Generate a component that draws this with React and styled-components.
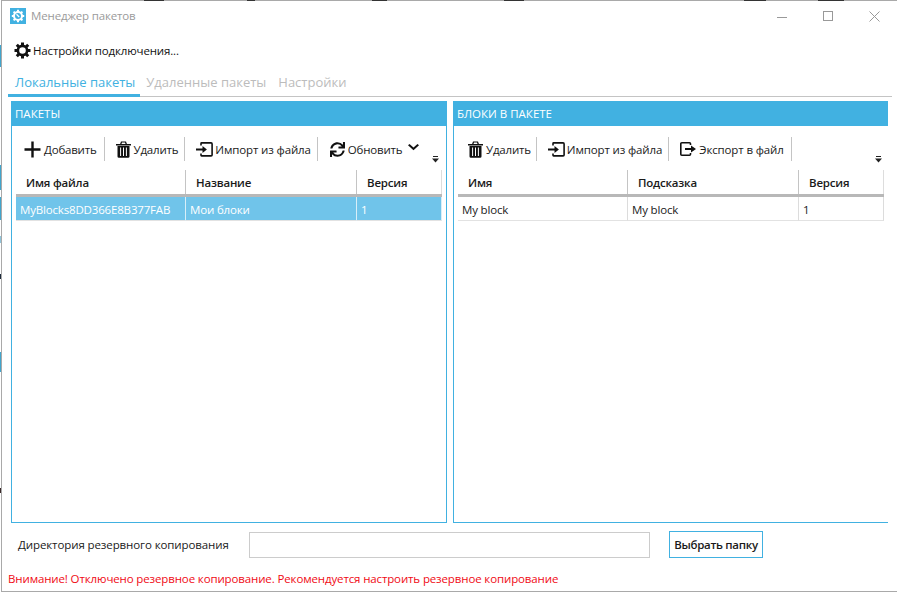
import React from 'react';
import styled, { createGlobalStyle } from 'styled-components';
import { FaSync } from 'react-icons/fa';

const Global = createGlobalStyle`
  html, body { margin: 0; padding: 0; width: 897px; height: 593px; overflow: hidden; background: #fff; }
  * { box-sizing: border-box; }
  body { font-family: "Open Sans", "Noto Sans", sans-serif; font-size: 12px; color: #1a1a1a; }
`;

const Desktop = styled.div`
  width: 897px; height: 593px; padding: 0 0 1px 1px;
  background: linear-gradient(#fff 45px, #41a5cc 45px, #41a5cc 67px, #fff 67px, #fff 165px, #41a5cc 165px, #41a5cc 190px, #fff 190px, #fff 197px, #41a5cc 197px, #41a5cc 220px, #fff 220px, #fff 236px, #8fc4da 236px, #8fc4da 243px, #fff 243px, #fff 274px, #1c2a3a 274px, #1c2a3a 279px, #fff 279px, #fff 352px, #41a5cc 352px, #41a5cc 372px, #fff 372px, #fff 488px, #3a2a2a 488px, #3a2a2a 493px, #fff 493px);
`;
const Win = styled.div`
  width: 896px; height: 592px; background: #fff; border-left: 1px solid #a9a9a9; border-bottom: 1px solid #a9a9a9;
  display: flex; flex-direction: column;
`;
const TopEdge = styled.div`
  height: 1px; flex: none;
  background: linear-gradient(90deg, #a9a9a9 142px, #333 142px, #333 162px, #a9a9a9 162px, #a9a9a9 245px, #333 245px, #333 253px, #a9a9a9 253px, #a9a9a9 370px, #333 370px, #333 385px, #a9a9a9 385px, #a9a9a9 502px, #333 502px, #333 522px, #a9a9a9 522px, #a9a9a9 742px, #333 742px, #333 764px, #a9a9a9 764px, #a9a9a9 816px, #333 816px, #333 842px, #a9a9a9 842px);
`;
const TitleBar = styled.div`
  height: 30px; flex: none; display: flex; align-items: center; padding-left: 8px; gap: 5px;
`;
const TitleText = styled.span`
  color: #9b9b9b; font-size: 11.5px; letter-spacing: -0.15px; flex: 1; padding-bottom: 1px;
`;
const WinButtons = styled.div`
  display: flex; align-items: center; color: #999;
`;
const WinBtn = styled.div`
  width: 46px; height: 30px; display: flex; align-items: center; justify-content: center;
  svg { display: block; }
`;
const ConnRow = styled.div`
  height: 40px; flex: none; display: flex; align-items: center; padding: 0 0 2px 12px; gap: 2px;
  color: #111; font-size: 11.5px; letter-spacing: -0.15px;
`;
const Tabs = styled.div`
  margin: 0 5px 0 6px; height: 26px; flex: none; display: flex; border-bottom: 1px solid #c4c4c4;
`;
const Tab = styled.div`
  font-size: 13px; height: 26px; padding: 0 ${p => (p.$active ? 5 : 6)}px 0 ${p => (p.$active ? 7 : 6)}px; line-height: 22px;
  color: ${p => (p.$active ? '#41b1e1' : '#bcbcbc')};
  border-bottom: ${p => (p.$active ? '3px solid #41b1e1' : 'none')};
  white-space: nowrap;
`;
const Panels = styled.div`
  display: flex; gap: 6px; padding: 4px 0 0 9px; height: 426px; flex: none;
`;
const Panel = styled.section`
  width: ${p => p.$w}px; height: 422px; display: flex; flex-direction: column;
  border: 1px solid #41b1e1; border-right: ${p => (p.$open ? 'none' : '1px solid #41b1e1')};
`;
const PanelHead = styled.div`
  height: 25px; margin: -1px ${p => (p.$open ? 0 : -1)}px 0 -1px; background: #41b1e1; color: #fff; font-size: 11.5px;
  padding: 0 0 0 4px; display: flex; align-items: center;
`;
const Toolbar = styled.div`
  position: relative; height: 44px; display: flex; align-items: center; padding: 2px 0 0 11px;
`;
const ToolBtn = styled.div`
  height: 24px; display: flex; align-items: center; gap: ${p => p.$gap ?? 3}px;
  padding: 0 ${p => p.$pr ?? 6}px 0 ${p => p.$pl ?? 11}px;
  border-right: ${p => (p.$plain ? 'none' : '1px solid #c4c4c4')};
  font-size: 11.5px; letter-spacing: ${p => p.$ls ?? -0.2}px; color: #1a1a1a; white-space: nowrap;
  svg { flex: none; display: block; color: #111; }
`;
const Overflow = styled.svg`
  position: absolute; right: ${p => p.$r}px; top: 30px;
`;
const Table = styled.div`
  margin: 0 4px; width: 426px; display: flex; flex-direction: column;
`;
const Row = styled.div`
  display: grid; grid-template-columns: 170px 171px 85px;
`;
const HeadCell = styled.div`
  height: 24px; padding-left: 10px; display: flex; align-items: center;
  font-weight: 600; font-size: 11.5px; letter-spacing: -0.2px; color: #1a1a1a;
  border-right: 1px solid #c4c4c4;
  &:last-child { border-right: 1px solid #ddd; }
`;
const HeadLine = styled.div`
  height: 3px; background: #b8b8b8;
`;
const Cell = styled.div`
  height: 24px; padding: 1px 0 0 4px; display: flex; align-items: center; font-size: 11.5px; letter-spacing: -0.17px;
  white-space: nowrap; overflow: hidden;
  color: ${p => (p.$sel ? '#fff' : '#1a1a1a')};
  background: ${p => (p.$sel ? '#70c4ea' : '#fff')};
  border-right: 1px solid ${p => (p.$sel ? '#d8eef8' : '#dcdcdc')};
  border-bottom: 1px solid #e2e2e2;
`;
const Footer = styled.div`
  height: 27px; flex: none; margin-top: 8px; display: flex; align-items: center; padding-left: 16px;
`;
const FooterLabel = styled.span`
  width: 231px; font-size: 11.5px; letter-spacing: -0.1px; color: #1a1a1a;
`;
const PathInput = styled.div`
  width: 401px; height: 26px; border: 1px solid #ccc;
`;
const PickBtn = styled.div`
  margin-left: 19px; width: 94px; height: 27px; border: 1px solid #41b1e1; font-weight: 600;
  font-size: 11.5px; letter-spacing: -0.3px; display: flex; align-items: center; justify-content: center; color: #1a1a1a;
`;
const Warning = styled.div`
  margin: 13px 0 0 6px; color: #f00a14; font-size: 11.5px; letter-spacing: -0.13px;
`;

const AppIcon = () => (
  <svg width="16" height="16" viewBox="0 0 16 16">
    <rect width="16" height="16" fill="#41b1e1" />
    <circle cx="8" cy="8" r="4" fill="none" stroke="#fff" strokeWidth="2" />
    <path d="M8 1.800v2.200M8 12v2.200M1.800 8H4M12 8h2.200M3.600 3.600l1.600 1.600M10.800 10.800l1.600 1.600M3.600 12.400l1.600-1.600M10.800 5.200l1.600-1.600" stroke="#fff" strokeWidth="2" />
    <path d="M6.500 6.300L9.200 9" stroke="#fff" strokeWidth="1.300" />
  </svg>
);
const Gear = () => (
  <svg width="17" height="17" viewBox="0 0 17 17" fill="none" stroke="#111">
    <circle cx="8.500" cy="8.500" r="4.600" strokeWidth="2.600" />
    <path d="M8.500 .5v3M8.500 13.500v3M.5 8.500h3M13.500 8.500h3M2.800 2.800l2.200 2.200M12 12l2.200 2.200M2.800 14.200L5 12M12 5l2.200-2.200" strokeWidth="3" />
  </svg>
);
const Plus = () => (
  <svg width="17" height="17" viewBox="0 0 17 17"><path d="M8.500 0.500v16M0.500 8.500h16" stroke="#111" strokeWidth="2.400" /></svg>
);
const Trash = () => (
  <svg width="15" height="17" viewBox="0 0 15 17">
    <path d="M0 3h15v1.600H0zM5 .4h5l1 2.800H9.600L9 1.600H6l-.6 1.600H4z" fill="#111" />
    <path d="M1.500 5h12v10.400A1.400 1.400 0 0 1 12.100 16.800H2.900A1.400 1.400 0 0 1 1.500 15.400z" fill="#111" />
    <path d="M4.600 6.500v8.500M7.500 6.500v8.500M10.400 6.500v8.500" stroke="#fff" strokeWidth="1" />
  </svg>
);
const Import = () => (
  <svg width="17" height="15" viewBox="0 0 17 15" fill="none" stroke="#111">
    <path d="M5 3.500V1.500a0.600 0.600 0 0 1 .6-.6h9.500a1 1 0 0 1 1 1v11a1 1 0 0 1-1 1H5.600a.6.6 0 0 1-.6-.6V11.500" strokeWidth="1.600" />
    <path d="M0 6.400h6.500V4l4.400 3.500-4.400 3.500V8.600H0z" fill="#111" stroke="none" />
  </svg>
);
const Export = () => (
  <svg width="16" height="14" viewBox="0 0 16 14" fill="none" stroke="#111">
    <path d="M10.500 3V1.800a1 1 0 0 0-1-1H1.800a1 1 0 0 0-1 1v10.400a1 1 0 0 0 1 1h7.700a1 1 0 0 0 1-1V11" strokeWidth="1.600" />
    <path d="M5 6h6V3.600L16 7l-5 3.400V8H5z" fill="#111" stroke="none" />
  </svg>
);
const Chevron = () => (
  <svg width="11" height="7" viewBox="0 0 11 7" style={{ marginLeft: 3, marginTop: -3 }}>
    <path d="M0 1.200L1.500 0 5.500 3.400 9.500 0 11 1.200 5.500 6.200z" fill="#111" />
  </svg>
);
const OverflowMark = ({ r }) => (
  <Overflow $r={r} width="7" height="7" viewBox="0 0 7 7">
    <path d="M1 .5h5" stroke="#222" strokeWidth="1" /><path d="M0 2.500h7L3.500 6.500z" fill="#222" />
  </Overflow>
);

export default function App() {
  return (
    <>
      <Global />
      <Desktop>
        <Win>
          <TopEdge />
          <TitleBar>
            <AppIcon />
            <TitleText>Менеджер пакетов</TitleText>
            <WinButtons>
              <WinBtn><svg width="11" height="11"><path d="M0 6.500h10" stroke="#999" /></svg></WinBtn>
              <WinBtn><svg width="11" height="11"><rect x=".5" y=".5" width="9" height="9" fill="none" stroke="#999" /></svg></WinBtn>
              <WinBtn><svg width="11" height="11"><path d="M.5.5l10 10M10.500.5l-10 10" stroke="#999" /></svg></WinBtn>
            </WinButtons>
          </TitleBar>
          <ConnRow><Gear />Настройки подключения...</ConnRow>
          <Tabs>
            <Tab $active>Локальные пакеты</Tab>
            <Tab>Удаленные пакеты</Tab>
            <Tab>Настройки</Tab>
          </Tabs>
          <Panels>
            <Panel $w={436}>
              <PanelHead>ПАКЕТЫ</PanelHead>
              <Toolbar>
                <ToolBtn $pl={1} $pr={7}><Plus />Добавить</ToolBtn>
                <ToolBtn><Trash />Удалить</ToolBtn>
                <ToolBtn $gap={2} $ls={-0.13}><Import />Импорт из файла</ToolBtn>
                <ToolBtn $pl={12} $plain><FaSync size={15} />Обновить<Chevron /></ToolBtn>
                <OverflowMark r={7} />
              </Toolbar>
              <Table>
                <Row>
                  <HeadCell>Имя файла</HeadCell><HeadCell>Название</HeadCell><HeadCell>Версия</HeadCell>
                </Row>
                <HeadLine />
                <Row>
                  <Cell $sel>MyBlocks8DD366E8B377FAB</Cell><Cell $sel>Мои блоки</Cell><Cell $sel>1</Cell>
                </Row>
              </Table>
            </Panel>
            <Panel $w={435} $open>
              <PanelHead $open>БЛОКИ В ПАКЕТЕ</PanelHead>
              <Toolbar>
                <ToolBtn $pl={3} $pr={5}><Trash />Удалить</ToolBtn>
                <ToolBtn $gap={2} $ls={-0.13}><Import />Импорт из файла</ToolBtn>
                <ToolBtn $pr={7} $ls={-0.13}><Export />Экспорт в файл</ToolBtn>
                <OverflowMark r={6} />
              </Toolbar>
              <Table>
                <Row>
                  <HeadCell>Имя</HeadCell><HeadCell>Подсказка</HeadCell><HeadCell>Версия</HeadCell>
                </Row>
                <HeadLine />
                <Row>
                  <Cell>My block</Cell><Cell>My block</Cell><Cell>1</Cell>
                </Row>
              </Table>
            </Panel>
          </Panels>
          <Footer>
            <FooterLabel>Директория резервного копирования</FooterLabel>
            <PathInput />
            <PickBtn>Выбрать папку</PickBtn>
          </Footer>
          <Warning>Внимание! Отключено резервное копирование. Рекомендуется настроить резервное копирование</Warning>
        </Win>
      </Desktop>
    </>
  );
}
